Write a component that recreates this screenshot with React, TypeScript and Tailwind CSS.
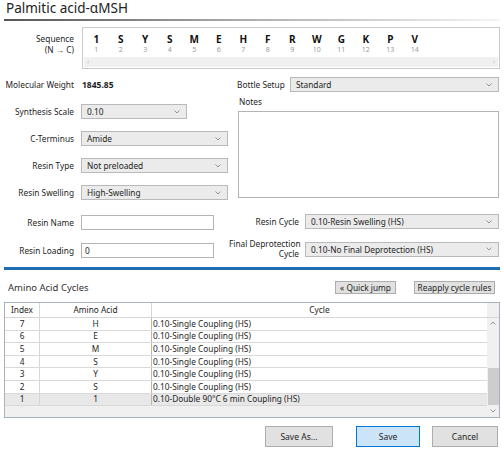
import React from 'react';

const sequence = ['1', 'S', 'Y', 'S', 'M', 'E', 'H', 'F', 'R', 'W', 'G', 'K', 'P', 'V'];

const cycles = [
  { index: '7', aa: 'H', cycle: '0.10-Single Coupling (HS)' },
  { index: '6', aa: 'E', cycle: '0.10-Single Coupling (HS)' },
  { index: '5', aa: 'M', cycle: '0.10-Single Coupling (HS)' },
  { index: '4', aa: 'S', cycle: '0.10-Single Coupling (HS)' },
  { index: '3', aa: 'Y', cycle: '0.10-Single Coupling (HS)' },
  { index: '2', aa: 'S', cycle: '0.10-Single Coupling (HS)' },
  { index: '1', aa: '1', cycle: '0.10-Double 90°C 6 min Coupling (HS)' },
];

function Chevron({ up = false }: { up?: boolean }) {
  return (
    <svg width="6" height="4" viewBox="0 0 6 4" className="shrink-0">
      <polyline
        points={up ? '0.5,3.5 3,1 5.5,3.5' : '0.5,0.5 3,3 5.5,0.5'}
        fill="none"
        stroke="#8a8a8a"
        strokeWidth="0.9"
      />
    </svg>
  );
}

function Select({ value, className = '' }: { value: string; className?: string }) {
  return (
    <div
      className={`flex items-center justify-between h-[15px] border border-[#b9b9b9] bg-[#ebebeb] pl-[5px] pr-[6px] ${className}`}
    >
      <span className="leading-[13px]">{value}</span>
      <Chevron />
    </div>
  );
}

function Input({ value = '', className = '' }: { value?: string; className?: string }) {
  return (
    <div className={`flex items-center h-[15px] border border-[#b4b4b4] bg-white pl-[3px] ${className}`}>
      <span className="leading-[13px]">{value}</span>
    </div>
  );
}

function Row({ label, children, className = '' }: { label: string; children: React.ReactNode; className?: string }) {
  return (
    <div className={`flex items-center h-[15px] ${className}`}>
      <div className="w-[70px] text-right whitespace-nowrap">{label}</div>
      <div className="ml-[7px]">{children}</div>
    </div>
  );
}

export default function App() {
  return (
    <div className="w-[504px] h-[450px] bg-white text-[8.3px] leading-[10px] text-[#1e1e1e] font-['Noto_Sans',sans-serif] overflow-hidden">
      {/* Title */}
      <div className="h-[16px] pl-[6px] text-[13.5px] leading-[16px] text-[#222]">Palmitic acid-αMSH</div>
      <div className="mx-[4px] mt-[3px] h-[2px] bg-gradient-to-r from-[#555] via-[#b0b0b0] to-[#f5f5f5]" />

      {/* Sequence */}
      <div className="flex mt-[6px]">
        <div className="w-[74px] pt-[6px] text-right leading-[11px]">
          <div>Sequence</div>
          <div>(N → C)</div>
        </div>
        <div className="ml-[8px] w-[418px] h-[42px] border border-[#cacaca] bg-white flex flex-col">
          <div className="flex pl-[1px] pt-[5px]">
            {sequence.map((s, i) => (
              <div key={i} className="w-[24.5px] flex flex-col items-center">
                <span className="text-[10px] leading-[12px] font-bold text-[#111]">{s}</span>
                <span className="text-[7px] leading-[9px] text-[#9a9a9a]">{i + 1}</span>
              </div>
            ))}
          </div>
          <div className="mt-auto mx-[1px] mb-[1px] h-[10px] bg-[#f0f0f0] flex items-center justify-between px-[3px] text-[7px] text-[#c4c4c4]">
            <span>‹</span>
            <span>›</span>
          </div>
        </div>
      </div>

      {/* Form */}
      <div className="flex mt-[8px] pl-[4px]">
        <div className="w-[226px]">
          <Row label="Molecular Weight">
            <span className="ml-[1px] font-bold text-[8.5px]">1845.85</span>
          </Row>
          <Row label="Synthesis Scale" className="mt-[12px]">
            <Select value="0.10" className="w-[106px]" />
          </Row>
          <Row label="C-Terminus" className="mt-[12px]">
            <Select value="Amide" className="w-[147px]" />
          </Row>
          <Row label="Resin Type" className="mt-[12px]">
            <Select value="Not preloaded" className="w-[147px]" />
          </Row>
          <Row label="Resin Swelling" className="mt-[12px]">
            <Select value="High-Swelling" className="w-[147px]" />
          </Row>
          <Row label="Resin Name" className="mt-[15px]">
            <Input className="w-[133px]" />
          </Row>
          <Row label="Resin Loading" className="mt-[13px]">
            <Input value="0" className="w-[133px]" />
          </Row>
        </div>

        <div className="ml-[7px] w-[262px]">
          <div className="flex items-center h-[15px]">
            <div className="w-[53px] whitespace-nowrap">Bottle Setup</div>
            <Select value="Standard" className="flex-1" />
          </div>
          <div className="mt-[5px] pl-[2px]">Notes</div>
          <div className="mt-[4px] ml-[1px] h-[87px] border border-[#b4b4b4] bg-white" />
          <div className="flex items-center h-[15px] mt-[16px]">
            <div className="w-[62px] text-right whitespace-nowrap">Resin Cycle</div>
            <Select value="0.10-Resin Swelling (HS)" className="ml-[6px] flex-1" />
          </div>
          <div className="flex items-center mt-[10px]">
            <div className="w-[62px] text-right whitespace-nowrap leading-[10px]">
              <div className="-ml-[8px]">Final Deprotection</div>
              <div>Cycle</div>
            </div>
            <Select value="0.10-No Final Deprotection (HS)" className="ml-[6px] flex-1" />
          </div>
        </div>
      </div>

      {/* Blue divider */}
      <div className="mx-[4px] mt-[8px] h-[3px] bg-[#1f6db5]" />

      {/* Amino acid cycles header */}
      <div className="flex items-center h-[13px] mt-[11px] pl-[8px] pr-[9px]">
        <div className="text-[9.5px] text-[#333]">Amino Acid Cycles</div>
        <div className="ml-auto w-[61px] h-[13px] border border-[#adadad] bg-[#e1e1e1] flex items-center justify-center">
          « Quick jump
        </div>
        <div className="ml-[18px] w-[81px] h-[13px] border border-[#adadad] bg-[#e1e1e1] flex items-center justify-center">
          Reapply cycle rules
        </div>
      </div>

      {/* Table */}
      <div className="mx-[4px] mt-[8px] h-[116px] border border-[#a9b3be] flex flex-col">
        <div className="flex h-[15px] border-b border-[#d6d6d6] bg-white">
          <div className="w-[35px] flex items-center justify-center border-r border-[#d6d6d6]">Index</div>
          <div className="w-[112px] flex items-center justify-center border-r border-[#d6d6d6]">Amino Acid</div>
          <div className="flex-1 flex items-center justify-center">Cycle</div>
          <div className="w-[12px] bg-[#f0f0f0]" />
        </div>
        <div className="flex flex-1">
          <div className="flex-1 flex flex-col">
            {cycles.map((c, i) => (
              <div
                key={i}
                className={`flex h-[12.6px] border-b border-[#d9d9d9] ${i === cycles.length - 1 ? 'bg-[#e8e8e8]' : 'bg-white'}`}
              >
                <div className="w-[35px] flex items-center justify-center border-r border-[#d6d6d6]">{c.index}</div>
                <div className="w-[112px] flex items-center justify-center border-r border-[#b8b8b8]">{c.aa}</div>
                <div className="flex-1 flex items-center pl-[1px]">{c.cycle}</div>
              </div>
            ))}
            <div className="flex-1 bg-[#f0f0f0]" />
          </div>
          <div className="w-[12px] bg-[#f0f0f0] flex flex-col items-center">
            <div className="h-[10px] flex items-center">
              <Chevron up />
            </div>
            <div className="flex-1" />
            <div className="w-[11px] h-[37px] bg-[#cdcdcd]" />
            <div className="h-[12px] flex items-center">
              <Chevron />
            </div>
          </div>
        </div>
      </div>

      {/* Bottom buttons */}
      <div className="flex justify-end mt-[8px] pr-[6px] text-[8.5px]">
        <div className="w-[68px] h-[21px] border border-[#adadad] bg-[#e1e1e1] flex items-center justify-center">
          Save As...
        </div>
        <div className="ml-[23px] w-[64px] h-[21px] border border-[#0078d7] bg-[#cce4f7] flex items-center justify-center">
          Save
        </div>
        <div className="ml-[12px] w-[66px] h-[21px] border border-[#adadad] bg-[#e1e1e1] flex items-center justify-center">
          Cancel
        </div>
      </div>
    </div>
  );
}
